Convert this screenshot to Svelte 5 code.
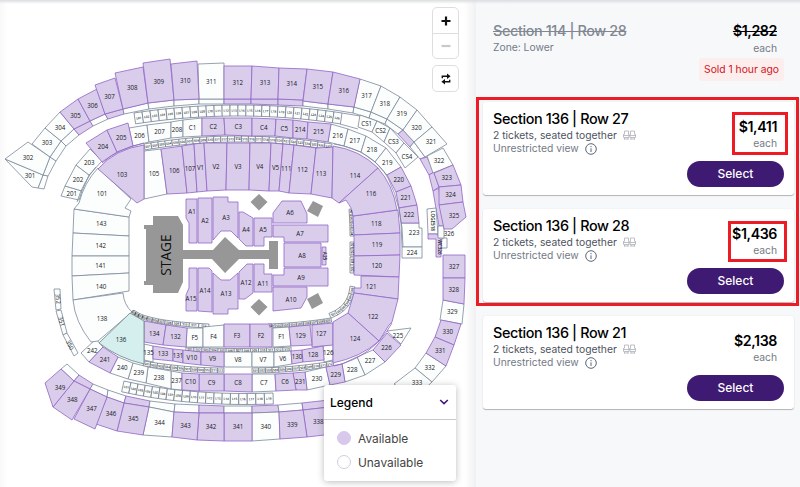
<script lang="ts">
    // [label, outline, available, label x, label y]
    type Section = [string, string, number?, number?, number?];

    const upper: Section[] = [
        ["301", "5,159 43,175 38,188 32,187", 0, 30, 176],
        ["302", "28,142 50,157 43,175 5,159", 0, 28, 158],
        ["303", "32,144 45,128 61,141 50,157"],
        ["304", "45,128 60,112 74,129 61,141"],
        ["305", "60,112 78,99 90,121 74,129", 1],
        ["306", "78,99 97,89 105,114 90,121", 1],
        ["307", "95,85 115,78 123,109 105,114", 1],
        ["308", "115,73 143,67 148,103 123,109", 1],
        ["309", "143,63 170,59 174,100 148,103", 1],
        ["310", "171,64 197,61 199,99 174,100", 1],
        ["311", "198,64 224,63 224,99 199,99"],
        ["312", "224,66 252,66 251,99 224,99", 1],
        ["313", "252,66 279,68 278,99 251,99", 1],
        ["314", "279,68 307,69 303,100 278,99", 1],
        ["315", "307,69 333,72 328,104 303,101", 1],
        ["316", "333,72 360,79 354,107 328,104", 1],
        ["317", "360,79 381,86 371,112 354,107"],
        ["318", "381,86 400,97 387,119 371,112"],
        ["319", "400,97 417,110 403,130 387,119"],
        ["320", "417,110 432,127 414,142 403,130"],
        ["321", "432,127 447,144 425,157 414,142", 0, 431, 142],
        ["322", "443,148 453,165 433,173 427,156"],
        ["323", "453,165 461,185 439,187 434,173", 1],
        ["324", "461,185 463,202 439,205 439,187", 1],
        ["325", "439,205 463,202 466,217 452,229 444,229", 1, 454, 216],
        ["326", "438,226 444,226 444,238 438,238", 0, 449, 234],
        ["327", "443,255 465,255 465,278 443,278", 1],
        ["328", "443,278 465,278 464,304 443,300", 1],
        ["329", "443,300 464,304 462,324 440,320"],
        ["330", "441,320 461,324 454,345 435,337", 1],
        ["331", "435,337 454,345 446,366 426,353", 1],
        ["332", "426,353 446,366 432,382 415,368"],
        ["333", "415,368 432,382 415,398 394,384", 0, 417, 383],
        ["338", "303,410 330,407 333,434 307,437", 1],
        ["339", "279,412 303,410 307,437 280,439", 1],
        ["340", "252,413 279,412 280,439 252,441"],
        ["341", "224,413 252,413 252,441 224,441", 1],
        ["342", "199,413 224,413 224,441 197,440", 1],
        ["343", "174,412 199,413 197,440 172,437", 1],
        ["344", "149,407 174,412 172,437 143,435"],
        ["345", "124,403 149,407 143,435 117,431", 1],
        ["346", "107,397 124,403 117,431 96,424", 1],
        ["347", "90,389 107,397 95,429 74,419", 1],
        ["348", "74,381 90,389 72,420 53,407", 1],
        ["349", "61,369 74,381 53,407 45,383", 1, 60, 388],
    ];

    const middle: Section[] = [
        ["201", "65,186 82,191 79,200 61,196"],
        ["202", "76,165 89,175 82,191 65,186"],
        ["203", "76,165 90,149 102,161 89,175"],
        ["204", "86,143 107,130 117,152 102,162", 1],
        ["205", "107,130 128,123 133,146 117,152", 1],
        ["206", "129,128 147,125 149,142 133,146"],
        ["207", "147,125 171,122 171,138 149,142"],
        ["208", "171,122 183,120 183,137 171,138"],
        ["C1", "183,120 202,118 202,136 183,137"],
        ["C2", "202,118 224,118 225,135 202,136", 1],
        ["C3", "224,118 252,118 252,136 225,135", 1],
        ["C4", "252,118 276,119 275,136 252,136", 1],
        ["C5", "276,119 293,120 293,138 275,136", 1],
        ["214", "293,120 308,122 307,139 293,138", 1],
        ["215", "308,122 331,124 328,142 307,139", 1],
        ["216", "331,124 348,129 344,146 328,142"],
        ["217", "348,129 366,136 361,152 344,146"],
        ["218", "366,136 386,148 375,162 361,152"],
        ["219", "386,148 401,167 387,175 375,162"],
        ["220", "401,167 411,186 396,192 387,175", 1],
        ["221", "411,186 417,205 399,208 396,192", 1],
        ["222", "417,205 419,223 401,223 399,208", 1],
        ["223", "401,223 419,223 419,228 422,228 422,247 402,247"],
        ["224", "402,247 422,247 422,258 402,258"],
        ["CS1", "360,115 377,121 372,132 358,127"],
        ["CS2", "377,121 390,128 384,142 372,132"],
        ["CS3", "390,128 404,143 396,153 384,142"],
        ["CS4", "404,143 418,157 405,168 396,153", 0, 407, 157],
        ["225", "387,331 411,328 401,344", 0, 398, 336],
        ["226", "387,333 401,345 385,362 373,350", 1],
        ["227", "373,350 385,362 365,375 357,357"],
        ["228", "357,357 365,375 345,382 342,364"],
        ["229", "342,364 345,382 330,385 326,367", 1],
        ["230", "326,367 330,385 307,390 305,372"],
        ["231", "305,372 307,390 296,390 293,373", 1],
        ["C6", "293,373 296,390 276,391 275,374", 1],
        ["C7", "275,374 276,391 252,392 252,374"],
        ["C8", "252,374 252,392 224,391 224,374", 1],
        ["C9", "224,374 224,391 199,391 199,374", 1],
        ["C10", "199,374 199,391 182,390 182,373", 1],
        ["237", "182,373 182,390 171,389 171,371"],
        ["238", "171,371 171,389 146,383 148,367"],
        ["239", "148,367 146,383 128,379 133,363"],
        ["240", "133,363 128,379 110,373 118,357"],
        ["241", "118,357 110,373 89,362 103,347", 1],
        ["242", "103,347 89,362 81,353 96,339"],
    ];

    const lower: Section[] = [
        ["143", "74,209 129,217 129,236 73,233"],
        ["142", "73,233 129,236 129,256 72,256"],
        ["141", "72,256 129,256 129,273 72,276"],
        ["140", "72,276 129,273 129,291 73,300", 0, 101, 287],
        ["105", "144,151 161,149 167,194 144,199"],
        ["106", "161,149 182,146 187,193 167,194", 1],
        ["107", "182,146 194,144 197,192 187,193", 1],
        ["V1", "194,144 204,143 207,191 197,192", 1],
        ["V2", "204,143 227,143 226,190 207,191", 1],
        ["V3", "227,143 250,143 249,190 226,190", 1],
        ["V4", "250,143 271,143 269,191 249,190", 1],
        ["V5", "271,143 283,144 279,191 269,191", 1],
        ["111", "283,144 294,145 289,193 279,191", 1],
        ["112", "294,145 316,148 311,194 289,193", 1],
        ["113", "316,148 333,147 332,198 311,194", 1, 321, 174],
        ["118", "353,216 398,210 400,233 354,235", 1],
        ["119", "354,235 400,233 400,255 354,256", 1],
        ["120", "354,256 400,255 399,277 354,275", 1],
        ["121", "361,276 399,277 398,299 354,293 354,288 361,288", 1],
        ["122", "354,293 398,299 392,322 389,325 379,341 348,313", 1, 373, 317],
        ["127", "312,325 333,323 333,345 312,347", 1, 321, 334],
        ["134", "144,321 166,325 163,345 144,342", 1],
        ["132", "166,325 187,328 186,347 163,345", 1],
        ["F5", "187,328 203,328 203,347 186,347"],
        ["F4", "203,327 224,325 224,347 203,347"],
        ["F3", "224,324 250,324 250,347 224,347", 1],
        ["F2", "250,324 272,324 272,347 250,347", 1],
        ["F1", "273,328 289,327 291,346 273,347"],
        ["129", "289,327 310,325 312,345 291,346", 1],
        ["135", "144,344 153,346 153,362 144,360"],
        ["133", "153,346 173,349 173,361 153,359", 1],
        ["131", "173,349 183,350 183,363 173,361", 1],
        ["V10", "183,350 201,352 201,365 183,363", 1],
        ["V9", "201,352 224,352 224,367 201,365", 1],
        ["V8", "224,352 252,352 252,367 224,367"],
        ["V7", "252,352 274,352 274,367 252,367"],
        ["V6", "274,352 291,351 292,364 274,367"],
        ["130", "291,351 302,350 303,362 292,364", 1],
        ["128", "302,350 323,346 324,360 303,362", 1],
        ["126", "323,346 333,344 333,360 324,362"],
    ];

    const floor: Section[] = [
        ["A1", "186,199 197,199 197,243 189,243 189,223 186,218", 1, 192, 212],
        ["A2", "198,198 212,198 212,243 198,243", 1],
        ["A3", "213,197 228,197 228,202 238,202 238,238 231,231 221,231 213,240", 1, 226, 218],
        ["A4", "239,212 243,212 253,218 253,246 246,246 239,239", 1, 246, 230],
        ["A5", "254,218 272,218 272,237 264,237 264,246 254,246", 1, 263, 230],
        ["A6", "282,201 301,201 307,214 307,223 273,223 273,213", 1, 290, 213],
        ["A7", "273,225 328,225 328,242 284,242 284,237 273,237", 1, 300, 234],
        ["A8", "284,243 321,243 321,267 284,267", 1, 302, 256],
        ["A9", "284,268 328,268 328,286 273,286 273,275 284,275", 1, 301, 278],
        ["A10", "273,287 307,287 307,297 301,308 273,311", 1, 291, 300],
        ["A11", "254,264 264,264 264,274 272,274 272,292 254,292", 1, 263, 284],
        ["A12", "247,264 253,264 253,293 245,299 239,299 239,272", 1, 246, 283],
        ["A13", "213,273 221,280 230,280 238,273 238,309 228,309 228,314 213,314", 1, 226, 294],
        ["A14", "198,268 209,268 212,271 212,312 198,311", 1, 205, 291],
        ["A15", "189,268 197,268 197,311 186,311 186,295 189,288", 1, 191, 299],
    ];

    const sections = [...upper, ...middle, ...lower, ...floor];

    // unlabelled back rows between the rings
    const backRows: [string, number?][] = [
        ["43,175 48,176 44,189 38,188"],
        ["50,157 56,161 48,176 43,175"],
        ["61,141 66,146 56,161 50,157"],
        ["61,141 74,129 79,135 66,146"],
        ["74,129 90,121 93,126 79,135", 1],
        ["90,121 105,114 108,119 93,126"],
        ["105,114 123,109 124,114 108,119", 1],
        ["123,109 148,103 149,109 124,114"],
        ["148,103 174,100 174,106 149,109"],
        ["174,100 199,99 199,104 174,106"],
        ["199,99 224,99 224,104 199,104"],
        ["224,99 251,99 251,104 224,104", 1],
        ["251,99 278,99 278,105 251,104", 1],
        ["278,99 303,100 303,106 278,105", 1],
        ["303,101 328,104 328,109 303,106"],
        ["328,104 354,107 353,113 328,109"],
        ["354,107 371,112 369,118 353,113"],
        ["371,112 387,119 385,124 369,118"],
        ["387,119 403,130 398,134 385,124"],
        ["403,130 414,142 410,147 398,134", 1],
        ["414,142 425,157 420,159 410,147"],
        ["420,159 427,157 434,172 429,175", 1],
        ["429,175 434,172 439,187 433,191", 1],
        ["433,191 439,188 440,205 444,226 439,226", 1],
        ["67,364 79,375 74,381 61,369"],
        ["79,375 93,384 90,389 74,381", 1],
        ["93,384 108,390 107,397 90,389"],
        ["108,390 126,396 124,403 107,397"],
        ["126,396 150,401 149,407 124,403", 1],
        ["150,401 175,404 174,412 149,407"],
        ["175,404 199,405 199,413 174,412"],
        ["199,405 224,406 224,413 199,413", 1],
        ["224,406 252,406 252,413 224,413"],
        ["252,406 278,405 279,412 252,413", 1],
        ["278,405 302,403 303,410 279,412"],
        ["302,403 329,400 330,407 303,410", 1],
        ["442,238 447,238 447,248 441,248"],
        ["427,209 436,208 438,234 428,234"],
        ["428,234 437,234 441,240 441,257 436,257 436,239 428,239", 1],
        ["322,247 326,247 326,265 322,265", 1],
        ["54,289 60,289 61,309 56,310"],
        ["56,311 61,310 67,333 63,335"],
        ["63,335 67,333 78,353 74,356"],
    ];

    type Box = { points: string; text: string; x: number; y: number; turn: number };

    // splits a quadratic curve into a row of small suites
    function suites(p: number[], count: number, depth: number, prefix: string): Box[] {
        const at = (t: number) => {
            const u = 1 - t;
            return [
                u * u * p[0] + 2 * u * t * p[2] + t * t * p[4],
                u * u * p[1] + 2 * u * t * p[3] + t * t * p[5],
            ];
        };
        return Array.from({ length: count }, (_, i) => {
            const [ax, ay] = at(i / count);
            const [bx, by] = at((i + 1) / count);
            const len = Math.hypot(bx - ax, by - ay);
            const nx = (-(by - ay) / len) * depth;
            const ny = ((bx - ax) / len) * depth;
            return {
                points: `${ax},${ay} ${bx},${by} ${bx + nx},${by + ny} ${ax + nx},${ay + ny}`,
                text: prefix + String(i + 1).padStart(2, "0"),
                x: (ax + bx + nx) / 2,
                y: (ay + by + ny) / 2,
                turn: (Math.atan2(by - ay, bx - ax) * 180) / Math.PI,
            };
        });
    }

    const boxes = [
        ...suites([134, 113, 238, 97, 342, 113], 26, 11, "L"),
        ...suites([144, 144, 238, 128, 332, 144], 27, 6, "S"),
        ...suites([124, 381, 190, 396, 273, 393], 19, 11, "L"),
        ...suites([134, 310, 146, 321, 209, 324], 12, 4, "S"),
        ...suites([268, 324, 300, 323, 331, 318], 9, 4, "S"),
        ...suites([331, 318, 353, 310, 355, 287], 6, -5, "S"),
        ...suites([186, 347, 238, 350, 291, 347], 13, 4, "S"),
        ...suites([144, 361, 185, 368, 224, 368], 12, 5, "S"),
        ...suites([252, 368, 292, 368, 333, 361], 12, 5, "S"),
        ...suites([353, 209, 354, 222, 354, 236], 4, 4, "S"),
        ...suites([354, 242, 354, 249, 354, 256], 2, 4, "S"),
        ...suites([354, 257, 354, 265, 354, 273], 2, 4, "S"),
    ];

    function centre(points: string) {
        const pts = points.split(" ").map((p) => p.split(",").map(Number));
        return [0, 1].map((k) => pts.reduce((sum, p) => sum + p[k], 0) / pts.length);
    }

    const labels = sections.map(([text, points, , x, y]) => {
        const c = centre(points);
        return { text, x: x ?? c[0], y: y ?? c[1] };
    });

    const listings = [
        { row: 27, price: "$1,411", mark: "first" },
        { row: 28, price: "$1,436", mark: "second" },
        { row: 21, price: "$2,138", mark: "" },
    ];

    let legendOpen = $state(true);
</script>

<div class="page">
    <main class="map">
        <svg class="venue" viewBox="0 0 476 487" width="476" height="487">
            {#each backRows as [points, open]}
                <polygon {points} class:open />
            {/each}
            {#each boxes as box}
                <polygon points={box.points} class="suite" />
            {/each}
            {#each sections as [, points, open]}
                {#if !open}<polygon {points} />{/if}
            {/each}
            {#each sections as [, points, open]}
                {#if open}<polygon {points} class="open" />{/if}
            {/each}

            <path d="M98 168Q84 183 79 203L74 209L129 217L131 211L125 208L131 199Z" />
            <path d="M73 300L123 293Q124 305 132 312L98 341L91 342Q75 322 73 300Z" />
            <path class="open" d="M98 169Q115 149 144 145V199L137 203Z" />
            <path class="open" d="M333 146Q360 150 378 168L339 203L332 198Z" />
            <path class="open" d="M378 168Q393 185 397 210L353 216Q352 207 346 200L339 203Z" />
            <path class="open" d="M348 313L379 341Q361 357 333 363V322Z" />
            <path class="picked" d="M130 313L144 321V364Q118 358 99 343Z" />
            <path class="line" d="M96 167Q83 182 77 202M342 113L360 116M340 124L358 129M334 144Q372 150 388 178Q403 208 403 247" />
            <path class="line open-line" d="M102 163Q117 149 144 143M334 366Q373 357 392 323" />

            {#each boxes as box}
                <text class="tiny" transform="translate({box.x} {box.y}) rotate({box.turn})" dy="1.2">{box.text}</text>
            {/each}
            {#each labels as label}
                <text x={label.x} y={label.y + 2.4}>{label.text}</text>
            {/each}
            <text x="102" y="196">101</text>
            <text x="122" y="177">103</text>
            <text x="355" y="178">114</text>
            <text x="371" y="196">116</text>
            <text x="355" y="341">124</text>
            <text x="102" y="321">138</text>
            <text x="121" y="341.5">136</text>
            <text class="side" transform="translate(431 221) rotate(90)">LOGE518</text>
            <text class="side" transform="translate(437.5 247) rotate(90)">WC326</text>
            <text class="side" transform="translate(323 256) rotate(90)">A25</text>
            <text class="side wide" transform="translate(56 299) rotate(85)">352</text>
            <text class="side wide" transform="translate(59.5 322) rotate(75)">351</text>
            <text class="side wide" transform="translate(68 346) rotate(62)">350</text>

            <path
                class="stage"
                d="M153 216H178L183 225V250H213L225 237L239 250H269V241H278V269H269V259H239L225 273L212 259H183V282L178 293H153V285H144V281H146V229H144V225H153Z"
            />
            <g class="stage">
                <path d="M259 194L267.500 202L259 210.500L250.500 202Z" />
                <path d="M259 299L267.500 307L259 315.500L250.500 307Z" />
                <path d="M313 201L323 206L318 217L307 211Z" />
                <path d="M318 293L323 303L312 309L307 299Z" />
            </g>
            <text class="stage-name" transform="translate(170.500 255) rotate(-90)">STAGE</text>
        </svg>

        <div class="controls">
            <div class="zoom">
                <button aria-label="Zoom in">
                    <svg viewBox="0 0 10 10" width="10" height="10"><path d="M5 .5V9.500M.5 5H9.500" /></svg>
                </button>
                <button aria-label="Zoom out" disabled>
                    <svg viewBox="0 0 10 10" width="10" height="10"><path d="M.5 5H9.500" /></svg>
                </button>
            </div>
            <button class="reset" aria-label="Reset">
                <svg viewBox="0 0 10 12" width="10" height="12">
                    <path class="arrow" d="M1.300 5.200V3.200H7M8.700 6.800V8.800H3" />
                    <path class="head" d="M6 .4L9.600 3.200L6 6ZM4 6L.4 8.800L4 11.600Z" />
                </svg>
            </button>
        </div>

        <section class="legend">
            <button class="legend-head" onclick={() => (legendOpen = !legendOpen)}>
                <span>Legend</span>
                <svg viewBox="0 0 10 6" width="10" height="6"><path d="M1.200 1L5 4.600L8.800 1" /></svg>
            </button>
            {#if legendOpen}
                <ul>
                    <li><i class="dot filled"></i>Available</li>
                    <li><i class="dot"></i>Unavailable</li>
                </ul>
            {/if}
        </section>
    </main>

    <aside>
        <article class="sold">
            <div class="info">
                <h3>Section 114 | Row 28</h3>
                <p class="muted">Zone: Lower</p>
            </div>
            <div class="cost">
                <strong>$1,282</strong>
                <span>each</span>
                <em>Sold 1 hour ago</em>
            </div>
        </article>

        {#each listings as { row, price, mark }}
            <article class="card">
                <div class="info">
                    <h3>Section 136 | Row {row}</h3>
                    <p>
                        2 tickets, seated together
                        <svg class="seats" viewBox="0 0 13 10" width="13" height="10">
                            <path d="M1.500 4.500V1H5.500V4.500M7.500 4.500V1H11.500V4.500M.5 4V7.500H6V4M7 4V7.500H12.500V4M0 5.500H13M1.500 7.500V9.500M5 7.500V9.500M8 7.500V9.500M11.500 7.500V9.500M1 9H5.500M7.500 9H12" />
                        </svg>
                    </p>
                    <p class="muted">
                        Unrestricted view
                        <svg class="about" viewBox="0 0 12 12" width="12" height="12">
                            <circle cx="6" cy="6" r="5.300" />
                            <path d="M6 5.300V9M6 3V4.200" />
                        </svg>
                    </p>
                </div>
                <div class="cost">
                    <strong>{price}</strong>
                    <span>each</span>
                    <button class="select">Select</button>
                </div>
                {#if mark}<div class="mark {mark}"></div>{/if}
            </article>
        {/each}
        <div class="mark group"></div>
    </aside>
</div>

<style>
    :global(body) {
        font-family: Inter, "Liberation Sans", sans-serif;
        background: #fff;
    }
    .page {
        display: flex;
        width: 800px;
        height: 487px;
        overflow: hidden;
        position: relative;
    }
    .page::before {
        content: "";
        position: absolute;
        z-index: 2;
        inset: 0 0 auto;
        height: 4px;
        background: linear-gradient(#dcdde0, #e8e9eb00);
    }
    button {
        font: inherit;
        border: 0;
        padding: 0;
        background: none;
    }
    .map {
        position: relative;
        flex: 0 0 476px;
        background: linear-gradient(90deg, #f9f9f9, #fff 8px 464px, #f1f1f3);
    }
    .venue {
        display: block;
    }
    .venue polygon,
    .venue path {
        fill: #fcfefd;
        stroke: #7b899b;
        stroke-width: 0.8;
    }
    .venue .open {
        fill: #dacdec;
        stroke: #9165c5;
    }
    .venue .suite {
        stroke: #637184;
        stroke-width: 0.7;
    }
    .venue .picked {
        fill: #d4efed;
        stroke: #6d7d86;
    }
    .venue .line {
        fill: none;
    }
    .venue .open-line {
        stroke: #9165c5;
    }
    .venue path.stage,
    .venue .stage path {
        fill: #979797;
        stroke: none;
    }
    .venue text {
        font: 500 6.2px "Open Sans", sans-serif;
        fill: #17171c;
        text-anchor: middle;
    }
    .venue .tiny {
        font-size: 3.1px;
        font-weight: 600;
    }
    .venue .side {
        font-size: 4.6px;
        font-weight: 600;
    }
    .venue .wide {
        font-size: 5.8px;
        font-weight: 400;
    }
    .venue .stage-name {
        font-size: 13.8px;
        font-weight: 400;
        fill: #111;
    }

    .controls {
        position: absolute;
        top: 7px;
        left: 432px;
        display: flex;
        flex-direction: column;
        gap: 6px;
    }
    .controls button {
        display: grid;
        place-items: center;
        width: 25px;
        height: 25px;
    }
    .zoom,
    .controls .reset {
        box-sizing: border-box;
        width: 27px;
        background: #fff;
        border: 1.5px solid #dedede;
        border-radius: 5px;
    }
    .zoom button + button {
        border-top: 1px solid #dedede;
    }
    .controls .reset {
        height: 27px;
    }
    .controls path {
        fill: none;
        stroke: #111;
        stroke-width: 2.2;
    }
    .controls .arrow {
        stroke-width: 1.4;
    }
    .controls .head {
        fill: #111;
        stroke: none;
    }
    .controls button:disabled path {
        stroke: #c9c9c9;
    }

    .legend {
        position: absolute;
        left: 324px;
        top: 385px;
        width: 132px;
        height: 96px;
        background: #fff;
        border-radius: 3px;
        box-shadow: 0 1px 7px #0004;
    }
    .legend-head {
        display: flex;
        align-items: center;
        justify-content: space-between;
        box-sizing: border-box;
        width: 100%;
        height: 35px;
        padding: 0 7px 0 6px;
        border-bottom: 1px solid #c9c9c9;
        font-size: 12px;
        font-weight: 500;
        color: #000;
    }
    .legend-head path {
        fill: none;
        stroke: #40197a;
        stroke-width: 1.6;
    }
    .legend ul {
        list-style: none;
        margin: 0;
        padding: 6px 0 0 13px;
        font-size: 11.9px;
        color: #444;
    }
    .legend li {
        display: flex;
        align-items: center;
        gap: 7px;
        height: 24px;
    }
    .dot {
        box-sizing: border-box;
        width: 14px;
        height: 14px;
        border: 1px solid #ccd0dc;
        border-radius: 50%;
    }
    .dot.filled {
        background: #d8c9ec;
        border-color: #d8c9ec;
    }

    aside {
        position: relative;
        flex: 1;
        box-sizing: border-box;
        padding: 16px 6px 0 7px;
        background: #f7f8fa;
    }
    article {
        position: relative;
        box-sizing: border-box;
        display: flex;
        justify-content: space-between;
        width: 311px;
        height: 93px;
        margin-bottom: 14px;
        padding: 8px 10px;
    }
    .sold {
        height: 79px;
        margin-bottom: 7px;
        padding-top: 5px;
    }
    .card {
        background: #fff;
        border-radius: 3px;
        box-shadow: 0 1px 1px #0004, 0 0 2px #0001;
    }
    h3 {
        margin: 0;
        font-size: 14.4px;
        letter-spacing: -0.38px;
        line-height: 18.5px;
        font-weight: 500;
        color: #000;
    }
    p {
        display: flex;
        align-items: center;
        gap: 6px;
        margin: 0;
        font-size: 10.3px;
        line-height: 13.8px;
        color: #4d535e;
    }
    .muted {
        color: #747b87;
    }
    .seats {
        fill: none;
        stroke: #b5b9c0;
        stroke-width: 0.9;
    }
    .about {
        fill: none;
        stroke: #5d6675;
        stroke-width: 1;
    }
    .cost {
        display: flex;
        flex-direction: column;
        align-items: flex-end;
        padding-top: 7px;
    }
    .cost strong {
        padding-right: 7px;
        font-size: 14.2px;
        letter-spacing: -0.4px;
        line-height: 19px;
        font-weight: 600;
    }
    .cost span {
        padding-right: 7px;
        font-size: 10.3px;
        line-height: 15px;
        color: #747b87;
    }
    .sold .cost {
        padding-top: 0;
    }
    .sold h3 {
        color: #828892;
        line-height: 20px;
        text-decoration: line-through;
    }
    .sold strong {
        line-height: 20px;
        text-decoration: line-through;
    }
    .sold em {
        margin-top: 2px;
        padding: 0 5px;
        font-size: 10.3px;
        line-height: 23px;
        font-style: normal;
        color: #d3121b;
        background: #fdeeee;
        border-radius: 3px;
    }
    .select {
        width: 97px;
        height: 27px;
        margin-top: 9.5px;
        border-radius: 14px;
        background: #3f1a72;
        color: #fff;
        font-size: 12px;
        font-weight: 500;
    }
    .mark {
        position: absolute;
        box-sizing: border-box;
        border: 3px solid #ed1c24;
    }
    .first {
        left: 249px;
        top: 10px;
        width: 56px;
        height: 43px;
    }
    .second {
        left: 245px;
        top: 12px;
        width: 59px;
        height: 41px;
    }
    .group {
        left: 0;
        top: 97px;
        width: 323px;
        height: 209px;
    }
</style>
